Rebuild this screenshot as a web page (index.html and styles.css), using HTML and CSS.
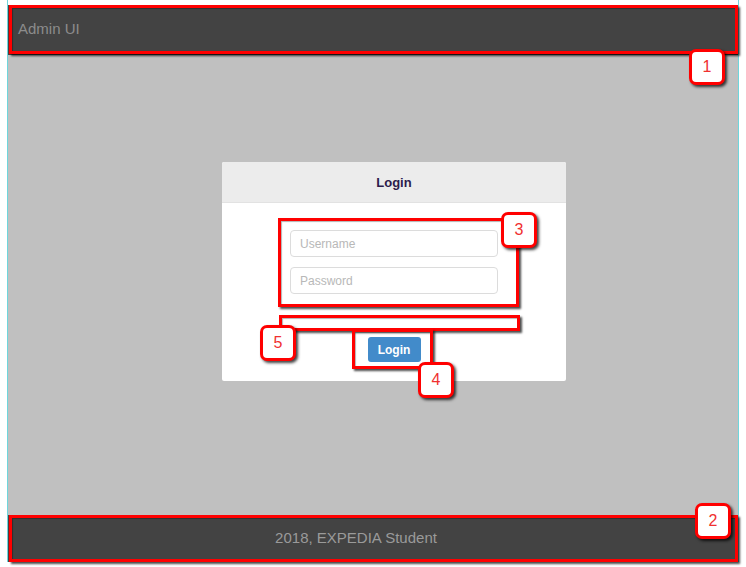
FILE: index.html
```html
<!DOCTYPE html>
<html>
<head>
<meta charset="utf-8">
<link rel="stylesheet" href="styles.css">
</head>
<body>
<div class="screen">
  <div class="app">
    <header class="topbar">Admin UI</header>
    <main class="main">
      <div class="card">
        <div class="card-head">Login</div>
        <div class="card-body">
          <input class="field" type="text" placeholder="Username">
          <input class="field" type="password" placeholder="Password">
          <button class="btn">Login</button>
        </div>
      </div>
    </main>
    <footer class="bottombar">2018, EXPEDIA Student</footer>
  </div>

  <div class="ann ann1"></div>
  <div class="ann ann2"></div>
  <div class="ann ann3"></div>
  <div class="ann ann5"></div>
  <div class="ann ann4"></div>

  <div class="badge b1">1</div>
  <div class="badge b2">2</div>
  <div class="badge b3">3</div>
  <div class="badge b5">5</div>
  <div class="badge b4">4</div>
</div>
</body>
</html>
```

FILE: styles.css
```css
* { box-sizing: border-box; }

html, body {
  margin: 0;
  padding: 0;
  background: #ffffff;
  font-family: "Liberation Sans", Arial, sans-serif;
}

.screen {
  position: relative;
  width: 746px;
  height: 567px;
  overflow: hidden;
  background: #ffffff;
}

.app {
  margin-left: 7px;
  width: 732px;
  height: 562px;
  padding-top: 5px;
  display: flex;
  flex-direction: column;
  border-left: 1px solid #6fd6dc;
  border-right: 1px solid #6fd6dc;
  background: #ffffff;
}

.topbar {
  height: 50px;
  background: #434343;
  color: #8c8c8c;
  font-size: 15px;
  padding-left: 10px;
  padding-bottom: 4px;
  display: flex;
  align-items: center;
}

.main {
  flex: 1;
  background: #c0c0c0;
  padding-top: 107px;
  padding-left: 214px;
}

.card {
  width: 344px;
  height: 219px;
  background: #ffffff;
  border-radius: 2px;
  overflow: hidden;
}

.card-head {
  height: 41px;
  background: #ececec;
  border-bottom: 1px solid #e2e2e2;
  color: #2d1c4d;
  font-weight: bold;
  font-size: 13px;
  display: flex;
  align-items: center;
  justify-content: center;
  padding-top: 1px;
}

.card-body {
  display: flex;
  flex-direction: column;
  align-items: center;
  padding-top: 27px;
}

.field {
  width: 208px;
  height: 27px;
  border: 1px solid #dcdcdc;
  border-radius: 4px;
  padding: 0 9px;
  font-family: "Liberation Sans", Arial, sans-serif;
  font-size: 12px;
  color: #555;
  background: #fff;
  margin-bottom: 10px;
  outline: none;
}

.field::placeholder { color: #b8b8b8; }

.btn {
  margin-top: 33px;
  width: 53px;
  height: 25px;
  border: none;
  border-radius: 3px;
  background: #428bca;
  color: #ffffff;
  font-family: "Liberation Sans", Arial, sans-serif;
  font-weight: bold;
  font-size: 12px;
  padding: 0;
}

.bottombar {
  height: 47px;
  background: #434343;
  color: #9a9a9a;
  font-size: 15px;
  display: flex;
  align-items: center;
  justify-content: center;
  padding-right: 34px;
  padding-bottom: 2px;
}

/* annotation overlays */
.ann {
  position: absolute;
  border: 3px solid #ff0000;
  box-shadow: 2px 2px 2px rgba(0, 0, 0, 0.7), inset 1px 1px 1px rgba(0,0,0,0.3);
}

.ann1 { left: 9px; top: 5px; width: 729px; height: 49px; }
.ann2 { left: 9px; top: 515px; width: 729px; height: 47px; }
.ann3 { left: 278px; top: 218px; width: 241px; height: 89px; }
.ann5 { left: 279px; top: 315px; width: 241px; height: 16px; }
.ann4 { left: 352px; top: 329px; width: 81px; height: 40px; }

.badge {
  position: absolute;
  width: 36px;
  height: 36px;
  background: #ffffff;
  border: 3px solid #ff0000;
  border-radius: 7px;
  box-shadow: 2px 2px 3px rgba(0, 0, 0, 0.75);
  color: #f03030;
  font-family: "Liberation Sans Narrow", "Liberation Sans", Arial, sans-serif;
  font-size: 16px;
  display: flex;
  align-items: center;
  justify-content: center;
}

.b1 { left: 689px; top: 49px; }
.b2 { left: 695px; top: 503px; }
.b3 { left: 501px; top: 212px; }
.b5 { left: 260px; top: 325px; }
.b4 { left: 418px; top: 362px; }
```
